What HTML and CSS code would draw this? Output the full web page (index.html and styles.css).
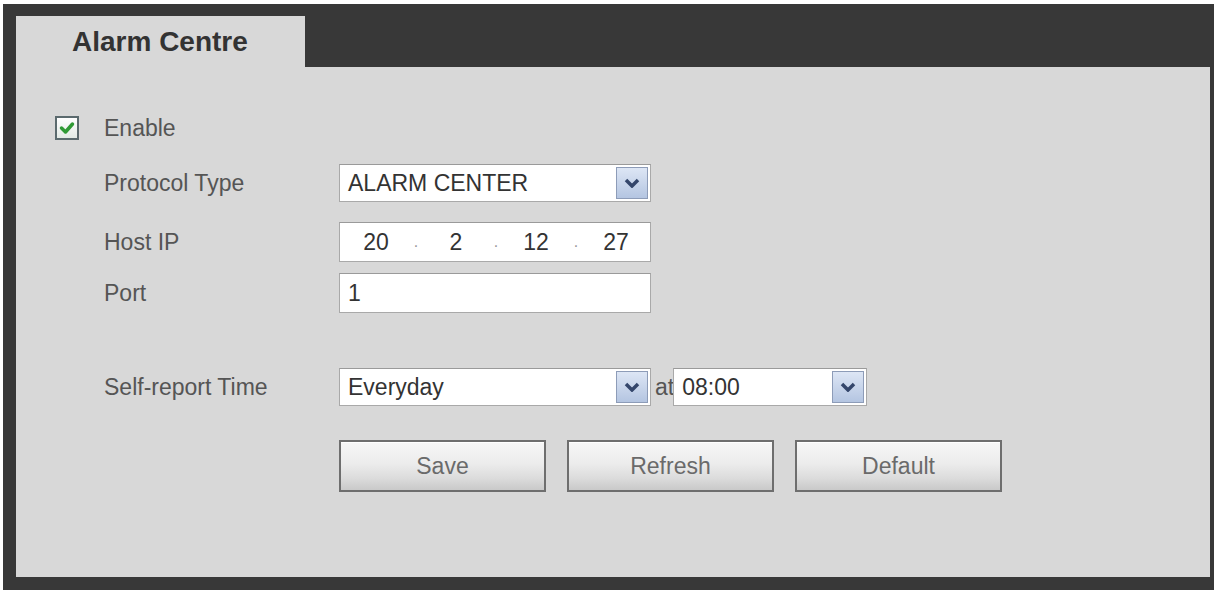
FILE: index.html
```html
<!DOCTYPE html>
<html>
<head>
<meta charset="utf-8">
<title>Alarm Centre</title>
<link rel="stylesheet" href="styles.css">
</head>
<body>
<div class="frame">
  <div class="header">
    <div class="tab">Alarm Centre</div>
  </div>
  <div class="content">
    <div class="check-row">
      <span class="checkbox">
        <svg width="16" height="14" viewBox="0 0 16 14"><polyline points="2.5,7 6.5,11 13.5,3" fill="none" stroke="#2f9a35" stroke-width="3.5" stroke-linecap="round" stroke-linejoin="round"/></svg>
      </span>
      <span class="label">Enable</span>
    </div>
    <div class="row r-protocol">
      <span class="label field-label">Protocol Type</span>
      <div class="select wide">
        <span class="value">ALARM CENTER</span>
        <span class="arrow"><svg width="16" height="10" viewBox="0 0 16 10"><polyline points="2,2 8,8 14,2" fill="none" stroke="#34466b" stroke-width="3.5"/></svg></span>
      </div>
    </div>
    <div class="row r-host">
      <span class="label field-label">Host IP</span>
      <div class="input wide ip">
        <span class="seg">20</span><span class="dot">.</span><span class="seg">2</span><span class="dot">.</span><span class="seg">12</span><span class="dot">.</span><span class="seg">27</span>
      </div>
    </div>
    <div class="row r-port">
      <span class="label field-label">Port</span>
      <div class="input wide"><span class="value">1</span></div>
    </div>
    <div class="row r-report">
      <span class="label field-label">Self-report Time</span>
      <div class="select wide">
        <span class="value">Everyday</span>
        <span class="arrow"><svg width="16" height="10" viewBox="0 0 16 10"><polyline points="2,2 8,8 14,2" fill="none" stroke="#34466b" stroke-width="3.5"/></svg></span>
      </div>
      <span class="at">at</span>
      <div class="select time">
        <span class="value">08:00</span>
        <span class="arrow"><svg width="16" height="10" viewBox="0 0 16 10"><polyline points="2,2 8,8 14,2" fill="none" stroke="#34466b" stroke-width="3.5"/></svg></span>
      </div>
    </div>
    <div class="row r-buttons">
      <span class="field-label"></span>
      <div class="buttons">
        <button class="btn">Save</button>
        <button class="btn">Refresh</button>
        <button class="btn">Default</button>
      </div>
    </div>
  </div>
</div>
</body>
</html>
```
FILE: styles.css
```css
html, body {
  margin: 0;
  padding: 0;
  background: #ffffff;
}
body {
  font-family: "Liberation Sans", Arial, sans-serif;
  font-size: 23px;
  color: #505050;
}
.frame {
  box-sizing: border-box;
  margin: 4px 0 0 3px;
  width: 1211px;
  height: 586px;
  background: #383838;
  padding: 0 4px 13px 13px;
  display: flex;
  flex-direction: column;
}
.header {
  height: 63px;
  display: flex;
  align-items: flex-end;
}
.tab {
  width: 289px;
  height: 51px;
  box-sizing: border-box;
  background: #d8d8d8;
  padding-left: 56px;
  font-size: 28px;
  font-weight: bold;
  line-height: 51px;
  color: #333333;
}
.content {
  flex: 1;
  background: #d8d8d8;
  padding: 49px 0 0 39px;
  box-sizing: border-box;
}
.check-row {
  display: flex;
  align-items: center;
  gap: 25px;
  height: 24px;
}
.checkbox {
  box-sizing: border-box;
  width: 24px;
  height: 24px;
  border: 2px solid #5b6a6e;
  background: linear-gradient(#ffffff, #e3eae6);
  display: flex;
  align-items: center;
  justify-content: center;
}
.label {
  color: #555555;
  white-space: nowrap;
}
.row {
  display: flex;
  align-items: center;
  padding-left: 49px;
}
.field-label {
  width: 235px;
  flex: none;
}
.r-protocol { margin-top: 24px; height: 38px; }
.r-host { margin-top: 20px; height: 40px; }
.r-port { margin-top: 11px; height: 40px; }
.r-report { margin-top: 55px; height: 38px; }
.r-buttons { margin-top: 34px; height: 52px; }

.select, .input {
  box-sizing: border-box;
  background: #ffffff;
  border: 1px solid #a9a9a9;
  border-top-color: #9a9a9a;
  display: flex;
  align-items: stretch;
  color: #333333;
}
.select {
  height: 38px;
  padding: 2px;
}
.input {
  height: 40px;
  align-items: center;
}
.wide { width: 312px; }
.time { width: 194px; }
.value {
  flex: 1;
  align-self: center;
  padding-left: 6px;
  white-space: nowrap;
}
.input .value { padding-left: 8px; }
.arrow {
  box-sizing: border-box;
  width: 32px;
  border: 1px solid #8d9cb8;
  background: linear-gradient(#dde6f5, #b4c5e1);
  display: flex;
  align-items: center;
  justify-content: center;
}
.ip {
  padding-left: 10px;
}
.seg {
  width: 52px;
  text-align: center;
}
.dot {
  width: 28px;
  text-align: center;
  color: #9a9a9a;
  font-size: 16px;
}
.at {
  margin: 0 -1px 0 4px;
  color: #555555;
}
.buttons {
  display: flex;
  gap: 21px;
}
.btn {
  box-sizing: border-box;
  width: 207px;
  height: 52px;
  border: 2px solid #6e6e6e;
  background: linear-gradient(#f7f7f7 0%, #ececec 45%, #dcdcdc 75%, #c9c9c9 100%);
  box-shadow: inset 0 1px 0 #ffffff;
  font-family: "Liberation Sans", Arial, sans-serif;
  font-size: 23px;
  color: #6a6a6a;
  padding: 0;
}
```
